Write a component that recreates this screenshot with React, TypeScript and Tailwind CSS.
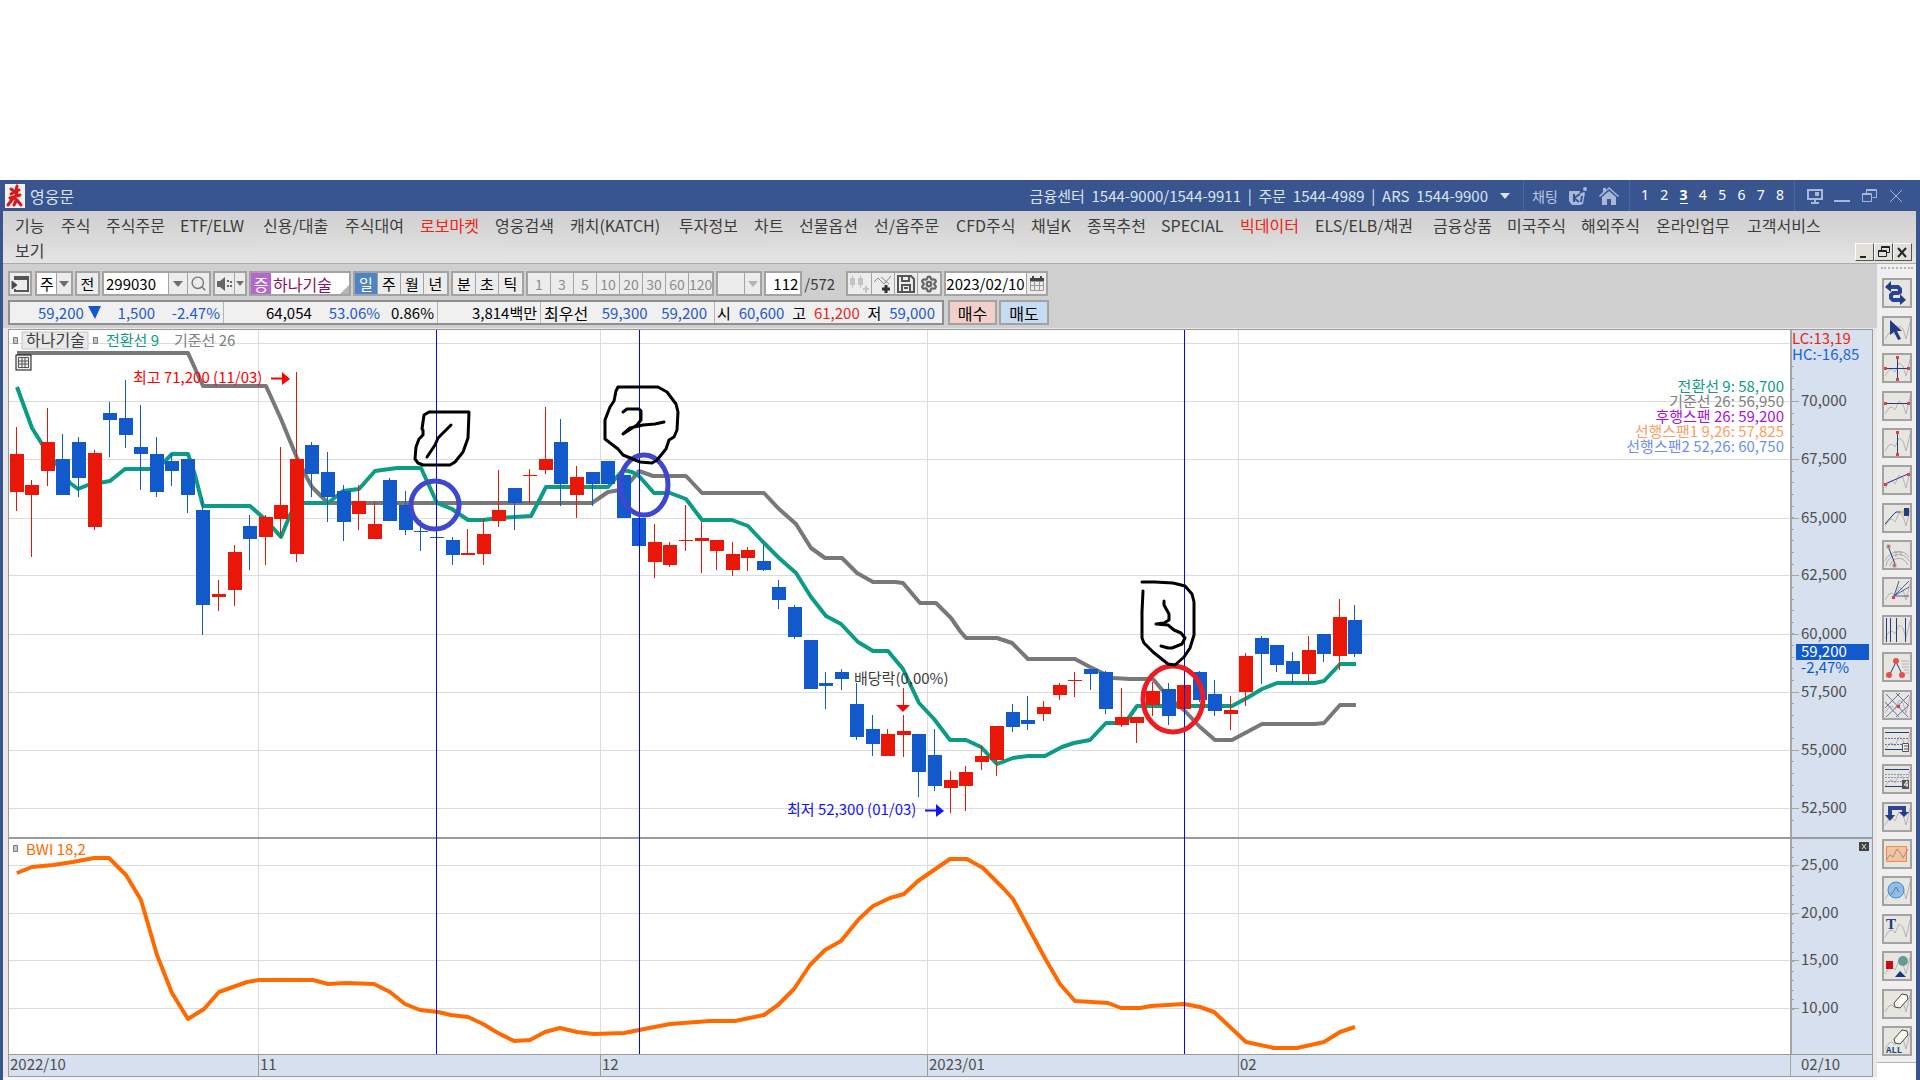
import type { ReactNode } from 'react';
import { Search, Settings } from 'lucide-react';

type Tone = 'up' | 'down';
type Candle = [tone: Tone, high: number, top: number, bottom: number, low: number];

const RED = '#e81708';
const BLUE = '#1259cb';
const NAVY = '#223c86';

const menuItems = [
    { label: '기능', width: 'w-[46px]' },
    { label: '주식', width: 'w-[45px]' },
    { label: '주식주문', width: 'w-[74px]' },
    { label: 'ETF/ELW', width: 'w-[83px]' },
    { label: '신용/대출', width: 'w-[82px]' },
    { label: '주식대여', width: 'w-[75px]' },
    { label: '로보마켓', width: 'w-[75px]', hot: true },
    { label: '영웅검색', width: 'w-[75px]' },
    { label: '캐치(KATCH)', width: 'w-[109px]' },
    { label: '투자정보', width: 'w-[75px]' },
    { label: '차트', width: 'w-[45px]' },
    { label: '선물옵션', width: 'w-[75px]' },
    { label: '선/옵주문', width: 'w-[82px]' },
    { label: 'CFD주식', width: 'w-[75px]' },
    { label: '채널K', width: 'w-[56px]' },
    { label: '종목추천', width: 'w-[74px]' },
    { label: 'SPECIAL', width: 'w-[79px]' },
    { label: '빅데이터', width: 'w-[75px]', hot: true },
    { label: 'ELS/ELB/채권', width: 'w-[118px]' },
    { label: '금융상품', width: 'w-[74px]' },
    { label: '미국주식', width: 'w-[74px]' },
    { label: '해외주식', width: 'w-[75px]' },
    { label: '온라인업무', width: 'w-[91px]' },
    { label: '고객서비스', width: 'w-[91px]' },
];

// Vertical positions are screen pixels, FIRST_X + STEP * index gives the column
const FIRST_X = 16.7;
const STEP = 15.565;

const candles: Candle[] = [
    ['up', 427, 454, 492, 511], ['up', 480, 485, 495, 557], ['up', 408, 442, 471, 486],
    ['down', 434, 459, 495, 495], ['down', 437, 442, 478, 497], ['up', 450, 453, 527, 530],
    ['down', 402, 413, 420, 457], ['down', 380, 418, 435, 448], ['down', 405, 447, 454, 490],
    ['down', 437, 454, 492, 497], ['down', 453, 461, 471, 486], ['down', 459, 459, 495, 513],
    ['down', 497, 510, 605, 635], ['up', 580, 594, 597, 611], ['up', 545, 552, 590, 606],
    ['down', 515, 526, 539, 570], ['up', 515, 517, 537, 565], ['up', 447, 505, 519, 537],
    ['up', 372, 459, 554, 562], ['down', 442, 445, 474, 497], ['down', 452, 472, 497, 522],
    ['down', 485, 491, 522, 541], ['up', 485, 501, 514, 530], ['up', 502, 524, 539, 539],
    ['down', 478, 480, 521, 521], ['down', 491, 505, 530, 535], ['down', 520, 531, 532, 551],
    ['down', 537, 537, 538, 538], ['down', 537, 540, 555, 565], ['up', 529, 553, 555, 555],
    ['up', 518, 534, 554, 565], ['up', 470, 510, 521, 527], ['down', 488, 488, 503, 530],
    ['up', 469, 475, 476, 503], ['up', 407, 459, 470, 474], ['down', 419, 442, 484, 506],
    ['up', 466, 477, 495, 518], ['down', 472, 472, 484, 506], ['down', 461, 461, 484, 484],
    ['down', 475, 475, 518, 518], ['down', 518, 518, 546, 546], ['up', 524, 542, 562, 578],
    ['up', 542, 545, 565, 567], ['up', 505, 540, 541, 551], ['up', 522, 538, 541, 573],
    ['up', 540, 540, 551, 570], ['up', 542, 554, 570, 576], ['up', 547, 550, 558, 571],
    ['down', 545, 561, 570, 571], ['down', 580, 587, 600, 609], ['down', 605, 607, 637, 639],
    ['down', 640, 640, 689, 689], ['down', 672, 683, 686, 709], ['down', 669, 672, 679, 690],
    ['down', 683, 704, 737, 740], ['down', 715, 729, 744, 756], ['up', 729, 734, 756, 756],
    ['up', 715, 731, 735, 757], ['down', 734, 734, 772, 797], ['down', 729, 755, 786, 791],
    ['up', 771, 780, 788, 813], ['up', 766, 772, 786, 811], ['up', 746, 756, 762, 770],
    ['up', 726, 726, 760, 776], ['down', 704, 712, 727, 732], ['down', 696, 720, 724, 730],
    ['up', 701, 707, 714, 721], ['up', 683, 685, 695, 700], ['up', 672, 680, 681, 697],
    ['down', 669, 669, 674, 690], ['down', 671, 672, 709, 714], ['up', 688, 717, 725, 727],
    ['up', 717, 717, 723, 743], ['up', 682, 691, 705, 716], ['down', 683, 689, 716, 725],
    ['up', 685, 685, 709, 709], ['down', 671, 672, 700, 702], ['down', 680, 694, 711, 716],
    ['up', 696, 710, 714, 730], ['up', 653, 656, 692, 706], ['down', 636, 638, 654, 684],
    ['down', 645, 645, 665, 672], ['down', 652, 661, 674, 684], ['up', 636, 650, 674, 681],
    ['down', 634, 634, 654, 662], ['up', 599, 617, 656, 670], ['down', 605, 620, 654, 657],
];

const conversionLine =
    '17,387 32,428 47,452 62,471 70,483 78,489 88,485 110,481 125,469 157,469 172,454 188,454 195,475 203,506 250,506 266,520 281,537 290,515 297,503 328,503 343,491 359,489 375,471 397,468 421,468 437,503 452,509 468,520 483,520 499,518 515,517 531,516 546,487 608,487 623,470 632,472 639,476 654,493 670,493 686,499 702,520 732,520 748,526 763,542 779,558 796,573 811,597 826,616 841,624 858,642 873,651 888,651 903,669 919,703 934,719 950,740 966,740 981,747 997,764 1013,758 1028,756 1045,756 1062,747 1074,743 1090,740 1106,723 1125,723 1137,706 1232,706 1247,698 1262,689 1277,683 1315,683 1324,681 1340,664 1356,664';

const baseLine =
    '17,353 188,353 203,386 266,386 281,419 297,458 305,474 312,487 328,503 592,503 608,492 620,490 630,482 639,471 653,476 686,476 702,493 764,493 779,509 796,524 811,548 825,558 842,558 857,573 873,582 895,582 903,583 920,603 936,603 951,618 960,631 966,638 997,638 1012,643 1028,659 1075,659 1090,667 1113,678 1130,679 1153,679 1168,697 1184,710 1200,727 1215,740 1232,740 1262,724 1315,724 1324,723 1340,705 1356,705';

const bandWidthLine =
    '17,873 32,867 53,865 73,862 94,858 109,858 126,875 141,900 157,955 172,993 188,1019 204,1009 219,992 247,982 259,980 313,980 328,984 347,983 374,984 390,992 405,1004 420,1010 438,1012 451,1015 468,1017 483,1024 498,1033 514,1041 530,1040 545,1032 560,1028 577,1032 594,1034 624,1033 639,1030 670,1024 710,1021 735,1021 764,1015 778,1005 794,989 810,965 825,950 841,941 859,919 873,906 890,898 904,894 918,881 950,859 967,859 983,868 1003,888 1013,899 1028,927 1046,960 1060,984 1075,1001 1108,1003 1121,1008 1140,1008 1151,1006 1184,1004 1200,1007 1214,1012 1246,1042 1274,1048 1297,1048 1324,1042 1340,1032 1355,1027';

const priceTicks = [
    { y: 401, label: '70,000' },
    { y: 459, label: '67,500' },
    { y: 518, label: '65,000' },
    { y: 575, label: '62,500' },
    { y: 634, label: '60,000' },
    { y: 692, label: '57,500' },
    { y: 750, label: '55,000' },
    { y: 808, label: '52,500' },
];

const bwiTicks = [
    { y: 865, label: '25,00' },
    { y: 913, label: '20,00' },
    { y: 960, label: '15,00' },
    { y: 1008, label: '10,00' },
];

const months = [
    { x: 258, label: '11' },
    { x: 600, label: '12' },
    { x: 927, label: '2023/01' },
    { x: 1238, label: '02' },
];

const readings = [
    { label: '전환선 9: 58,700', color: '#0c9b85' },
    { label: '기준선 26: 56,950', color: '#808080' },
    { label: '후행스팬 26: 59,200', color: '#a514dd' },
    { label: '선행스팬1 9,26: 57,825', color: '#f9a067' },
    { label: '선행스팬2 52,26: 60,750', color: '#6f90ee' },
];

/* ---------- Title bar ---------- */

const KiLogo = () => (
    <svg width="20" height="20" viewBox="0 0 20 20" aria-hidden="true">
        <path d="M1 5h11l-1 3 5-2 1 1-2 11-3 1H4l-3-4z" fill="#a9b8d8" />
        <path d="M6 8v8M12 8l-6 4 5 4M14 10l-1 6" stroke="#38558f" strokeWidth="2" fill="none" />
        <circle cx="17" cy="3" r="2" fill="#a9b8d8" />
    </svg>
);

const TitleBar = () => (
    <header className="flex h-[31px] items-center bg-[#38558f] pl-[5px] pr-4 text-[#dbe3f3]">
        <svg width="20" height="24" viewBox="0 0 20 24" aria-hidden="true">
            <rect width="20" height="24" fill="#f3f1f1" />
            <path d="M12 2l-1 5M6 5l4 3M14 6l-8 4M12 8l-2 6M5 14l10-3M9 13l-6 8M10 13l1 4-2 4M12 16l4 5" stroke="#d8181c" strokeWidth="3" fill="none" strokeLinecap="round" />
        </svg>
        <h1 className="ml-[5px] text-base leading-5">영웅문</h1>
        <div className="ml-auto flex h-full items-center">
            <span className="whitespace-pre">금융센터  1544-9000/1544-9911  |  주문  1544-4989  |  ARS  1544-9900</span>
            <button aria-label="전화번호 더보기" className="ml-3 mr-[13px]">
                <svg width="10" height="6" viewBox="0 0 10 6"><path d="M0 0h10L5 6z" fill="currentColor" /></svg>
            </button>
            <div className="flex h-full w-[106px] items-center justify-between border-l border-[#4a67a3] pl-2 pr-[10px] text-sm text-[#b9c6e0]">
                <button>채팅</button>
                <button aria-label="키움"><KiLogo /></button>
                <button aria-label="홈">
                    <svg width="20" height="18" viewBox="0 0 20 18" fill="#a9b8d8"><path d="M10 0l10 9-1 1-9-8-9 8-1-1 4-4V1h3v2zM10 4l7 6v8h-5v-6H8v6H3v-8z" /></svg>
                </button>
            </div>
            <div className="flex h-full w-[165px] items-center justify-between border-l border-[#4a67a3] pl-[11px] pr-[10px] font-['Noto_Sans'] text-sm leading-4 text-white">
                {[1, 2, 3, 4, 5, 6, 7, 8].map(n => (
                    <button key={n} className={n === 3 ? 'border-b border-white font-bold' : 'border-b border-transparent'}>{n}</button>
                ))}
            </div>
            <div className="flex h-full w-[110px] items-center justify-between border-l border-[#4a67a3] pl-3 text-[#a9b8d8]">
                <button aria-label="모니터">
                    <svg width="16" height="16" viewBox="0 0 16 16" fill="none" stroke="currentColor" strokeWidth="2">
                        <path d="M1 2h14v9H1zM8 11v3M4 15h8" /><path d="M8 4h4v4H8z" fill="currentColor" stroke="none" />
                    </svg>
                </button>
                <button aria-label="최소화">
                    <svg width="16" height="16" viewBox="0 0 16 16"><path d="M0 12h16v2H0z" fill="currentColor" /></svg>
                </button>
                <button aria-label="이전 크기로">
                    <svg width="16" height="16" viewBox="0 0 16 16" fill="none" stroke="currentColor"><path d="M5.500 5V1.500h10v8h-4M5 2.500h10M1.500 5.500h9v8h-9zM1 6.500h10" /></svg>
                </button>
                <button aria-label="닫기">
                    <svg width="16" height="16" viewBox="0 0 16 16" stroke="currentColor"><path d="M2 2l12 12M14 2L2 14" /></svg>
                </button>
            </div>
        </div>
    </header>
);

const windowButtons = [
    { name: '창 최소화', path: 'M4 13h6' },
    { name: '창 복원', path: 'M6.500 6V2.500h8v6h-3M6 3.500h8M3.500 6.500h8v6h-8zM3 7.500h8' },
    { name: '창 닫기', path: 'M4 4l8 9M12 4l-8 9' },
];

const MenuBar = () => (
    <div className="h-[53px] border-b border-[#acacac] bg-linear-to-b from-[#cfcfcf] to-[#e4e4e4] pl-[12px] pr-1 text-base leading-5 text-[#3c3c3c]">
        <nav className="flex h-[27px] items-center whitespace-nowrap">
            {menuItems.map(item => (
                <a key={item.label} href="#" className={`${item.width} shrink-0 ${item.hot ? 'text-[#ee2410]' : ''}`}>{item.label}</a>
            ))}
        </nav>
        <div className="flex h-6 items-center justify-between">
            <a href="#">보기</a>
            <div className="flex pt-1">
                {windowButtons.map(b => (
                    <button key={b.name} aria-label={b.name} className="h-[18px] w-[19px] border border-white border-b-[#55534f] border-r-[#55534f] bg-[#e2e0da]">
                        <svg width="17" height="16" viewBox="0 0 17 16" fill="none" stroke="#222" strokeWidth={b.name === '창 복원' ? 1 : 2}><path d={b.path} /></svg>
                    </button>
                ))}
            </div>
        </div>
    </div>
);

/* ---------- Chart toolbar ---------- */

const box = 'flex h-[25px] shrink-0 items-center border-2 border-[#a3a3a3]';
const inset = 'flex h-full items-center justify-center border-l border-[#a3a3a3] bg-[#ececec]';

const Arrow = ({ dim }: { dim?: boolean }) => (
    <svg width="10" height="6" viewBox="0 0 10 6" aria-hidden="true"><path d="M0 0h10L5 6z" fill={dim ? '#b4b4b4' : '#6e6e6e'} /></svg>
);

const ButtonGroup = ({ labels, active, dim }: { labels: string[]; active?: string; dim?: boolean }) => (
    <div className={`${box} divide-x divide-[#a3a3a3] bg-[#ececec] ${dim ? 'text-sm text-[#8b8b8b]' : 'text-black'}`}>
        {labels.map(label => (
            <button key={label} className={`h-full min-w-[23px] ${label === active ? 'bg-[#4f84c4] text-white' : ''}`}>
                {label}
            </button>
        ))}
    </div>
);

const ToolbarRow = () => (
    <div className="flex h-[25px] gap-0.5">
        <button aria-label="창 메뉴" className={`${box} mr-px w-[24px] justify-center bg-[#ececec]`}>
            <svg width="18" height="18" viewBox="0 0 18 18" fill="none" stroke="#555">
                <path d="M4 5V2h13v14H4v-2" strokeWidth="2" /><path d="M4 4h13" strokeWidth="2" /><path d="M1 6l5 4-5 4z" fill="#444" />
            </svg>
        </button>
        <div className={`${box} w-[38px] bg-white`}>
            <select aria-label="시장" className="h-full w-[19px] appearance-none pl-[3px] outline-none"><option>주</option></select>
            <span className={`${inset} flex-1`}><Arrow /></span>
        </div>
        <button className={`${box} w-[25px] justify-center bg-[#ececec]`}>전</button>
        <div className={`${box} w-[109px] bg-white`}>
            <input aria-label="종목코드" defaultValue="299030" className="h-full w-[64px] pl-0.5 outline-none" />
            <button aria-label="종목 목록" className={`${inset} w-[19px]`}><Arrow /></button>
            <button aria-label="검색" className={`${inset} flex-1`}><Search size={17} color="#777" /></button>
        </div>
        <div className={`${box} w-[34px] bg-[#ececec]`}>
            <button aria-label="소리" className="flex h-full w-[19px] items-center justify-center">
                <svg width="16" height="14" viewBox="0 0 16 14" fill="#666"><path d="M0 4h3l5-4v14l-5-4H0zM10 3h2v2h-2zM13 4h2v2h-2zM10 8h2v2h-2zM13 8h2v2h-2z" /></svg>
            </button>
            <button aria-label="소리 설정" className={`${inset} flex-1`}>
                <svg width="8" height="5" viewBox="0 0 8 5"><path d="M0 0h8L4 5z" fill="#6e6e6e" /></svg>
            </button>
        </div>
        <div className={`${box} relative w-[102px] bg-white text-base text-[#8e0f5a]`}>
            <span className="mr-0.5 flex h-[21px] w-[20px] items-center justify-center bg-[#b566cf] text-white">증</span>
            하나기술
            <svg className="absolute bottom-0 right-0" width="9" height="9" viewBox="0 0 9 9"><path d="M9 0v9H0z" fill="#b5b5b5" /></svg>
        </div>
        <ButtonGroup labels={['일', '주', '월', '년']} active="일" />
        <ButtonGroup labels={['분', '초', '틱']} />
        <ButtonGroup labels={['1', '3', '5', '10', '20', '30', '60', '120']} dim />
        <div className={`${box} w-[46px] bg-[#ececec]`}>
            <select aria-label="분 단위" disabled className="h-full flex-1 appearance-none" />
            <span className={`${inset} w-[16px]`}><Arrow dim /></span>
        </div>
        <input aria-label="표시 봉 수" defaultValue="112" className={`${box} w-[38px] bg-white pr-0.5 text-right outline-none`} />
        <span className="flex w-[40px] items-center text-[#3c3c3c]">/572</span>
        <div className={`${box} w-[96px] divide-x divide-[#a3a3a3] bg-[#ececec] *:flex *:h-full *:flex-1 *:items-center *:justify-center`}>
            <button aria-label="봉 추가">
                <svg width="20" height="20" viewBox="0 0 20 20" fill="#c4c4c4"><path d="M1 4h5v7H1zM3 1h1v13H3zM9 4h5v7H9zM11 1h1v13h-1zM14 14h2v-2h2v2h2v2h-2v3h-2v-3h-2z" /></svg>
            </button>
            <button aria-label="지표 추가">
                <svg width="20" height="20" viewBox="0 0 20 20" fill="none"><path d="M1 8l4-4 6 6 7-8M8 3l8 7" stroke="#888" /><path d="M13 11v8M9 15h8" stroke="#333" strokeWidth="3" /></svg>
            </button>
            <button aria-label="저장">
                <svg width="18" height="18" viewBox="0 0 18 18" fill="none" stroke="#555" strokeWidth="2"><path d="M1 1h13l3 3v13H1zM5 1v5h7V1M5 17v-7h8v7M7 13h4" /></svg>
            </button>
            <button aria-label="설정"><Settings size={18} color="#666" strokeWidth={3} /></button>
        </div>
        <div className={`${box} w-[104px] bg-white`}>
            <input aria-label="날짜" defaultValue="2023/02/10" className="h-full w-[80px] outline-none" />
            <button aria-label="달력" className={`${inset} flex-1`}>
                <svg width="16" height="15" viewBox="0 0 16 15" fill="none" stroke="#999"><path d="M1.500 5.500h13v9h-13zM5.500 5v9M10.500 5v9M1 9.500h14" /><path d="M1 2h14v3H1zM3 0h2v2H3zM11 0h2v2h-2z" fill="#444" stroke="none" /></svg>
            </button>
        </div>
    </div>
);

const QuoteRow = () => (
    <div className="flex h-[25px] gap-1">
        <div className="flex w-[936px] items-center divide-x divide-[#b5b5b5] border-2 border-[#8f8f8f] bg-[#f0f0f0] text-[#2457cd] *:flex *:h-full *:items-center *:justify-between">
            <div className="w-[214px] pl-7 pr-[3px]">
                <span className="flex items-center gap-1">
                    59,200
                    <svg width="13" height="13" viewBox="0 0 13 13"><path d="M0 0h13L7 13z" fill={BLUE} /></svg>
                </span>
                <span>1,500</span>
                <span>-2.47%</span>
            </div>
            <div className="w-[214px] pl-[42px] pr-[3px]">
                <span className="text-black">64,054</span>
                <span className="flex gap-[11px]">53.06% <span className="text-black">0.86%</span></span>
            </div>
            <div className="w-[103px] justify-end! pr-[3px] text-black">3,814백만</div>
            <div className="w-[174px] pl-[3px] pr-[7px]"><span className="text-base text-black">최우선</span><span>59,300</span><span>59,200</span></div>
            <div className="flex-1 pl-0.5 pr-[7px]">
                <span className="text-black">시</span><span>60,600</span>
                <span className="text-black">고</span><span className="text-[#e02a1c]">61,200</span>
                <span className="text-black">저</span><span>59,000</span>
            </div>
        </div>
        <button className="w-[49px] border-2 border-[#a3a3a3] bg-[#f3cfca] text-base leading-5 text-black">매수</button>
        <button className="-ml-0.5 w-[50px] border-2 border-[#a3a3a3] bg-[#c6dcf2] text-base leading-5 text-black">매도</button>
    </div>
);

/* ---------- Chart ---------- */

const Plot = () => (
    <svg className="h-[724px] min-w-0 flex-1 bg-white" fontSize="15">
        <g transform="translate(-9 -330)">
            <g stroke="#dcdcdc" strokeWidth="1" shapeRendering="crispEdges">
                {[343, ...priceTicks.map(t => t.y), ...bwiTicks.map(t => t.y)].map(y => (
                    <line key={y} x1="9" x2="4000" y1={y + 0.5} y2={y + 0.5} />
                ))}
                {months.map(m => <line key={m.x} x1={m.x + 0.5} x2={m.x + 0.5} y1="330" y2="1054" />)}
            </g>
            <path d="M9 838h4000" stroke="#9b9b9b" strokeWidth="2" />

            <g fill="none" strokeLinejoin="round" strokeWidth="4">
                <polyline points={baseLine} stroke="#787878" />
                <polyline points={conversionLine} stroke="#0c9b85" />
                <polyline points={bandWidthLine} stroke="#ff6a00" />
            </g>

            {candles.map(([tone, high, top, bottom, low], i) => {
                const x = Math.round(FIRST_X + STEP * i);
                return (
                    <g key={i} fill={tone === 'up' ? RED : BLUE} shapeRendering="crispEdges">
                        <rect x={x - 1} y={high} width="1" height={low - high} />
                        <rect x={x - 7} y={top} width="14" height={Math.max(bottom - top, 1)} />
                    </g>
                );
            })}

            <g stroke="#0808f0" strokeWidth="1" shapeRendering="crispEdges">
                <path d="M436.500 330v724M639.500 330v724M1184.500 330v724" />
            </g>

            {/* Legends */}
            <g fill="#c8c8c8" stroke="#7a7a7a">
                <path d="M13.500 337.500h4v6h-4zM93.500 337.500h4v6h-4zM13.500 845.500h4v6h-4z" />
            </g>
            <rect x="22" y="332" width="66" height="17" fill="#e9e9e9" stroke="#c4c4c4" />
            <text x="26" y="346" fontSize="16" fill="#3c3c3c">하나기술</text>
            <text x="106" y="346" fill="#0c9b85">전환선 9</text>
            <text x="174" y="346" fill="#808080">기준선 26</text>
            <text x="26" y="855" fill="#ff6a00">BWI 18,2</text>
            <g stroke="#555" fill="#eee">
                <rect x="16" y="355" width="15" height="15" stroke="#111" />
                <path d="M18.500 357.500h10v10h-10zM22 357v11M25 357v11M18 361h11M18 364h11" strokeWidth="1" />
            </g>

            {/* High, low and ex-dividend marks */}
            <text x="133" y="383" fill="#f00">최고 71,200 (11/03)</text>
            <path d="M271 378.500h12" stroke="#f00" strokeWidth="2" /><path d="M282 372v13l8-6z" fill="#f00" />
            <text x="787" y="815" fill="#1414f0">최저 52,300 (01/03)</text>
            <path d="M925 810.500h12" stroke="#1414f0" strokeWidth="2" /><path d="M936 804v13l8-6z" fill="#1414f0" />
            <text x="854" y="684" fill="#3c3c3c">배당락(0,00%)</text>
            <path d="M903.500 688v18" stroke={RED} /><path d="M896 705h14l-7 7z" fill="#f00" />

            {/* Hand-drawn notes */}
            <g fill="none" strokeLinecap="round" strokeLinejoin="round">
                <circle cx="435" cy="505" r="24" stroke="#3f48cc" strokeWidth="5" />
                <ellipse cx="644" cy="485" rx="24" ry="30" stroke="#3f48cc" strokeWidth="5" />
                <ellipse cx="1173" cy="699" rx="30" ry="33" stroke="#ed1c24" strokeWidth="5" />
                <g stroke="#000" strokeWidth="3">
                    <path d="M429 412h40l-1 26-5 14-8 10-5 3H423l-5-2-3-4 1-12 3-8 4-4v-5l-1-1 2-14z" />
                    <path d="M451 425l-13 13-3 7-8 12" />
                    <path d="M618 387h40l9 5 3 4 6 8 2 8-1 18-3 7-5 3-3 9-9 11-5 3-12-1-17-7-5-6-13-10v-19l5-13 4-6 2-10z" />
                    <path d="M623 412l4-3h12l2 2v9l-4 5-14 9 7-6 13-3 12-1 9-2" />
                    <path d="M1142 582h13l18 1 12 3 7 8 2 8v33l-4 13-6 9-9 8-7-1-15-12-9-9-2-5v-26l1-21" />
                    <path d="M1164 601v4l5 9v6l-5 3-8 1 12 1 6 5 7 3 4 5-3 6-10 4h-4l-7-2" />
                </g>
            </g>
        </g>
        <svg x="100%" overflow="visible">
            {readings.map((r, i) => (
                <text key={r.label} x="-6" y={62 + i * 15} textAnchor="end" fill={r.color}>{r.label}</text>
            ))}
        </svg>
    </svg>
);

const minorTicks = (from: number, to: number, step: number) =>
    Array.from({ length: Math.floor((to - from) / step) + 1 }, (_, i) => `M1 ${Math.round(from + i * step) + 0.5}h3`).join('');

const ValueAxis = () => (
    <svg className="h-[724px] w-[82px] shrink-0 bg-[#d6e0ef]" fontSize="15" fill="#4e4e4e">
        <path d="M1 0v724" stroke="#a5a5a5" strokeWidth="2" />
        <g transform="translate(0 -330)">
            <path d={minorTicks(366, 830, 11.63)} stroke="#a5a5a5" />
            <path d={minorTicks(847, 1012, 9.51)} stroke="#a5a5a5" />
            <path d="M0 838h90" stroke="#9b9b9b" strokeWidth="2" />
            {[...priceTicks, ...bwiTicks].map(t => (
                <g key={t.label}>
                    <path d={`M1 ${t.y + 0.5}h8`} stroke="#a5a5a5" />
                    <text x="11" y={t.y + 5}>{t.label}</text>
                </g>
            ))}
            <text x="2" y="344" fill="#ee2410">LC:13,19</text>
            <text x="2" y="360" fill="#1c63d8">HC:-16,85</text>
            <rect x="6" y="644" width="73" height="16" fill={BLUE} />
            <text x="11" y="657" fill="#fff">59,200</text>
            <text x="11" y="673" fill={BLUE}>-2,47%</text>
            <rect x="69" y="842" width="10" height="9" fill="#444" />
            <path d="M72 844l4 5M76 844l-4 5" stroke="#ddd" />
        </g>
    </svg>
);

const TimeAxis = () => (
    <div className="flex h-[23px] border-y border-[#9b9b9b] bg-[#d6e0ef]">
        <svg className="h-[21px] min-w-0 flex-1" fontSize="15" fill="#4e4e4e">
            <text x="1" y="15">2022/10</text>
            {months.map(m => (
                <g key={m.x}>
                    <path d={`M${m.x - 8.5} 0v21`} stroke="#9b9b9b" />
                    <text x={m.x - 7} y="15">{m.label}</text>
                </g>
            ))}
        </svg>
        <div className="w-[82px] border-l border-[#a5a5a5] pl-[10px] leading-[18px] text-[#4e4e4e]">02/10</div>
    </div>
);

/* ---------- Drawing tools ---------- */

const Wave = () => <path d="M3 23l4-6 3-1 3 3 4-9 4 3 3 10 3-12 1-5" stroke="#b5b5b5" fill="none" />;

const Dot = ({ x, y }: { x: number; y: number }) => <rect x={x - 1} y={y - 1} width="3" height="3" fill="#e2403f" />;

const tools: { name: string; icon: ReactNode }[] = [
    {
        name: '되돌리기',
        icon: <g><path d="M7 9h9l2 2v3l-2 1H11l-2 2v3l2 2h8" stroke="#2b4596" strokeWidth="4" fill="none" /><path d="M9 3v11L3 9zM18 16v11l6-5z" fill={NAVY} /></g>,
    },
    { name: '선택', icon: <g><Wave /><path d="M8 4v15l4-3 4 8 3-1-4-8h5z" fill={NAVY} /></g> },
    { name: '십자선', icon: <g><Wave /><path d="M3 15.500h24M15.500 4v22" stroke={NAVY} strokeWidth="1" /><Dot x={3} y={15} /><Dot x={26} y={15} /><Dot x={15} y={4} /><Dot x={15} y={26} /></g> },
    { name: '수평선', icon: <g><Wave /><path d="M3 12.500h24" stroke={NAVY} strokeWidth="1" /><Dot x={3} y={12} /><Dot x={26} y={12} /></g> },
    { name: '수직선', icon: <g><Wave /><path d="M15.500 4v22" stroke={NAVY} strokeWidth="1" /><Dot x={15} y={4} /><Dot x={15} y={26} /></g> },
    { name: '추세선', icon: <g><Wave /><path d="M3 19L26 9" stroke={NAVY} /><Dot x={3} y={19} /><Dot x={26} y={9} /></g> },
    { name: '펜', icon: <g><Wave /><path d="M3 21l7-8 4-4h5" stroke={NAVY} fill="none" /><path d="M18 9l5-3v7z" fill="#e9c277" /><path d="M22 5h5v8h-5z" fill={NAVY} /></g> },
    {
        name: '원호',
        icon: (
            <g fill="none" stroke="#a8a8a8">
                <path d="M3 21c4-10 18-13 24-4M4 26c2-12 17-16 23-5M8 26c2-9 13-11 18-1M12 12h8M14 12v5M19 12v4" />
                <path d="M6 6l7 18" stroke={NAVY} /><Dot x={6} y={6} /><Dot x={12} y={25} />
            </g>
        ),
    },
    { name: '부채꼴', icon: <g><Wave /><path d="M12 19l5-15M12 19L27 4M12 19l15-9M12 19h15" stroke="#4a5c9a" /><Dot x={11} y={20} /></g> },
    { name: '시간대', icon: <g><Wave /><path d="M4.500 3v24M8.500 3v24M14.500 3v24M23.500 3v24" stroke={NAVY} /></g> },
    {
        name: '패턴',
        icon: <g><path d="M19 9h8M20 12h7M20 15h7M22 18h5M23 21h4" stroke="#b5b5b5" /><path d="M8 22l6-12 6 12" stroke={NAVY} fill="none" /><g fill="#e05252"><circle cx="14" cy="9" r="3" /><circle cx="7" cy="23" r="3" /><circle cx="20" cy="23" r="3" /></g></g>,
    },
    { name: '격자', icon: <g><Wave /><path d="M3 12l14 15M4 4l22 23M14 3l13 13M3 18L18 3M4 27L27 5M14 27l13-12" stroke="#6472aa" /><Dot x={16} y={16} /></g> },
    {
        name: '등분선',
        icon: <g><Wave /><path d="M3 5.500h24M3 22.500h17" stroke={NAVY} /><path d="M3 11.500h24M3 17.500h24" stroke="#6472aa" strokeDasharray="2 1" /><path d="M20.500 16.500h6v8h-6zM22 19h4M22 22h4" fill="#eee" stroke="#555" /></g>,
    },
    {
        name: '4등분선',
        icon: <g><Wave /><path d="M3 5.500h24M3 22.500h17" stroke={NAVY} /><path d="M3 10.500h24M3 13.500h24M3 17.500h24" stroke="#8a95bd" strokeDasharray="2 1" /><path d="M20 16h7v9h-7z" fill="#555" /><path d="M25 23v-6l-3 4h4" stroke="#fff" fill="none" /></g>,
    },
    { name: '반전', icon: <g><Wave /><path d="M8 14V6h14v5" stroke="#2b4596" strokeWidth="4" fill="none" /><path d="M3 13h10l-5 6zM17 10h10l-5 5z" fill={NAVY} /></g> },
    { name: '사각형', icon: <g><path d="M4.500 7.500h20v15h-20z" fill="#f0c3a5" stroke="#ee8a4e" /><path d="M4 21l4-5 3 2 4-8 4 5 2 4 5-9" fill="none" stroke="#b98767" /></g> },
    { name: '원', icon: <g><Wave /><circle cx="14" cy="14" r="8" fill="#7db4e3" fillOpacity="0.8" stroke="#3a8bd8" /><path d="M8 20l3-4 3-5 3 5" fill="none" stroke="#4f7ba5" /></g> },
    { name: '문자', icon: <g><Wave /><text x="4" y="15" fontSize="15" fontWeight="bold" fontFamily="Liberation Serif" fill={NAVY}>T</text></g> },
    { name: '도형', icon: <g><Wave /><path d="M4 10h7v8H4z" fill="#cf0a14" /><circle cx="21" cy="10" r="5" fill="#679a96" /><path d="M13 26l5-6 6 6z" fill="#0f3b7d" /></g> },
    { name: '지우개', icon: <g><Wave /><path d="M12 14l8-9 5 1 1 4-8 9-5-1z" fill="#fbfaf2" stroke="#444" /></g> },
    {
        name: '모두 지우기',
        icon: <g><Wave /><path d="M12 13l8-9 5 1 1 4-8 9-5-1z" fill="#fbfaf2" stroke="#444" /><text x="4" y="27" fontSize="9" fontWeight="bold" fontFamily="Liberation Mono" fill={NAVY}>ALL</text></g>,
    },
];

const DrawingTools = () => (
    <aside className="mb-[17px] flex w-[39px] shrink-0 flex-col items-center justify-between border-b border-[#b5b5b5] bg-[#efefef] pb-1.5 pt-[3px]">
        <div className="h-1 w-8 border-t-2 border-dotted border-[#b5b5b5]" />
        {tools.map(tool => (
            <button key={tool.name} aria-label={tool.name} className="h-[30px] w-[30px] border-2 border-[#a3a3a3] bg-[#e6e5e0]">
                <svg width="26" height="26" viewBox="2 2 26 26">{tool.icon}</svg>
            </button>
        ))}
    </aside>
);

export default function App() {
    return (
        <div className="flex min-h-screen flex-col overflow-hidden bg-white pt-[180px] font-['Noto_Sans_CJK_KR',sans-serif] text-[15px] leading-5">
            <TitleBar />
            <main className="flex-1 border-l-[3px] border-r-4 border-[#38558f] bg-white">
                <MenuBar />
                <div className="flex">
                    <div className="min-w-0 flex-1 bg-[#e8e8e8]">
                        <div className="flex h-[65px] flex-col gap-1 border-b border-[#e8e8e8] bg-[#cfcfcf] pl-[5px] pt-[7px]">
                            <ToolbarRow />
                            <QuoteRow />
                        </div>
                        <section aria-label="하나기술 차트" className="ml-[5px] mr-1 border-x border-t border-[#9b9b9b]">
                            <div className="flex">
                                <Plot />
                                <ValueAxis />
                            </div>
                            <TimeAxis />
                        </section>
                        <div className="h-[3px] bg-[#f6f6f6]" />
                    </div>
                    <DrawingTools />
                </div>
            </main>
        </div>
    );
}
